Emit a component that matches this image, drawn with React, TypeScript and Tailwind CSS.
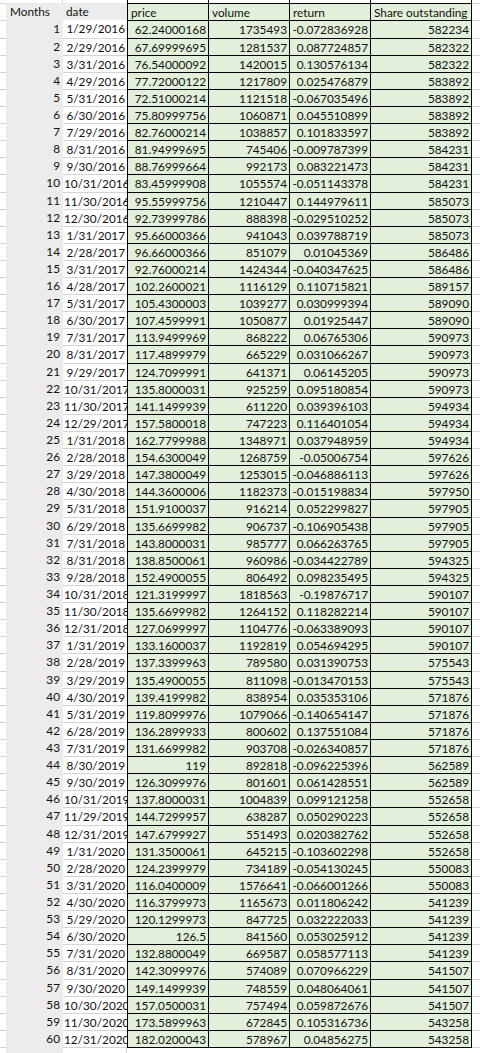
const rows: [string, string, string, string, string][] = [
  ["1/29/2016", "62.24000168", "1735493", "-0.072836928", "582234"],
  ["2/29/2016", "67.69999695", "1281537", "0.087724857", "582322"],
  ["3/31/2016", "76.54000092", "1420015", "0.130576134", "582322"],
  ["4/29/2016", "77.72000122", "1217809", "0.025476879", "583892"],
  ["5/31/2016", "72.51000214", "1121518", "-0.067035496", "583892"],
  ["6/30/2016", "75.80999756", "1060871", "0.045510899", "583892"],
  ["7/29/2016", "82.76000214", "1038857", "0.101833597", "583892"],
  ["8/31/2016", "81.94999695", "745406", "-0.009787399", "584231"],
  ["9/30/2016", "88.76999664", "992173", "0.083221473", "584231"],
  ["10/31/2016", "83.45999908", "1055574", "-0.051143378", "584231"],
  ["11/30/2016", "95.55999756", "1210447", "0.144979611", "585073"],
  ["12/30/2016", "92.73999786", "888398", "-0.029510252", "585073"],
  ["1/31/2017", "95.66000366", "941043", "0.039788719", "585073"],
  ["2/28/2017", "96.66000366", "851079", "0.01045369", "586486"],
  ["3/31/2017", "92.76000214", "1424344", "-0.040347625", "586486"],
  ["4/28/2017", "102.2600021", "1116129", "0.110715821", "589157"],
  ["5/31/2017", "105.4300003", "1039277", "0.030999394", "589090"],
  ["6/30/2017", "107.4599991", "1050877", "0.01925447", "589090"],
  ["7/31/2017", "113.9499969", "868222", "0.06765306", "590973"],
  ["8/31/2017", "117.4899979", "665229", "0.031066267", "590973"],
  ["9/29/2017", "124.7099991", "641371", "0.06145205", "590973"],
  ["10/31/2017", "135.8000031", "925259", "0.095180854", "590973"],
  ["11/30/2017", "141.1499939", "611220", "0.039396103", "594934"],
  ["12/29/2017", "157.5800018", "747223", "0.116401054", "594934"],
  ["1/31/2018", "162.7799988", "1348971", "0.037948959", "594934"],
  ["2/28/2018", "154.6300049", "1268759", "-0.05006754", "597626"],
  ["3/29/2018", "147.3800049", "1253015", "-0.046886113", "597626"],
  ["4/30/2018", "144.3600006", "1182373", "-0.015198834", "597950"],
  ["5/31/2018", "151.9100037", "916214", "0.052299827", "597905"],
  ["6/29/2018", "135.6699982", "906737", "-0.106905438", "597905"],
  ["7/31/2018", "143.8000031", "985777", "0.066263765", "597905"],
  ["8/31/2018", "138.8500061", "960986", "-0.034422789", "594325"],
  ["9/28/2018", "152.4900055", "806492", "0.098235495", "594325"],
  ["10/31/2018", "121.3199997", "1818563", "-0.19876717", "590107"],
  ["11/30/2018", "135.6699982", "1264152", "0.118282214", "590107"],
  ["12/31/2018", "127.0699997", "1104776", "-0.063389093", "590107"],
  ["1/31/2019", "133.1600037", "1192819", "0.054694295", "590107"],
  ["2/28/2019", "137.3399963", "789580", "0.031390753", "575543"],
  ["3/29/2019", "135.4900055", "811098", "-0.013470153", "575543"],
  ["4/30/2019", "139.4199982", "838954", "0.035353106", "571876"],
  ["5/31/2019", "119.8099976", "1079066", "-0.140654147", "571876"],
  ["6/28/2019", "136.2899933", "800602", "0.137551084", "571876"],
  ["7/31/2019", "131.6699982", "903708", "-0.026340857", "571876"],
  ["8/30/2019", "119", "892818", "-0.096225396", "562589"],
  ["9/30/2019", "126.3099976", "801601", "0.061428551", "562589"],
  ["10/31/2019", "137.8000031", "1004839", "0.099121258", "552658"],
  ["11/29/2019", "144.7299957", "638287", "0.050290223", "552658"],
  ["12/31/2019", "147.6799927", "551493", "0.020382762", "552658"],
  ["1/31/2020", "131.3500061", "645215", "-0.103602298", "552658"],
  ["2/28/2020", "124.2399979", "734189", "-0.054130245", "550083"],
  ["3/31/2020", "116.0400009", "1576641", "-0.066001266", "550083"],
  ["4/30/2020", "116.3799973", "1165673", "0.011806242", "541239"],
  ["5/29/2020", "120.1299973", "847725", "0.032222033", "541239"],
  ["6/30/2020", "126.5", "841560", "0.053025912", "541239"],
  ["7/31/2020", "132.8800049", "669587", "0.058577113", "541239"],
  ["8/31/2020", "142.3099976", "574089", "0.070966229", "541507"],
  ["9/30/2020", "149.1499939", "748559", "0.048064061", "541507"],
  ["10/30/2020", "157.0500031", "757494", "0.059872676", "541507"],
  ["11/30/2020", "173.5899963", "672845", "0.105316736", "543258"],
  ["12/31/2020", "182.0200043", "578967", "0.04856275", "543258"],
];

const cols = "grid grid-cols-[6px_57px_64px_81px_81px_81px_102px_1fr]";
const grid = "border-[#d4d4d4]";
const green = "bg-[#e2efda] border-t border-l border-black";

function Cell({ className, children }: { className: string; children?: React.ReactNode }) {
  return <div className={`overflow-hidden whitespace-nowrap ${className}`}>{children}</div>;
}

export default function App() {
  return (
    <div className="h-[1053px] w-[480px] overflow-hidden bg-white font-['Lato','Liberation_Sans',sans-serif] text-[11.8px] leading-[17.12px] text-[#111]">
      {/* row cut off above the header */}
      <div className={`${cols} h-[3.3px]`}>
        <Cell className="" />
        <Cell className={`border-r ${grid}`} />
        <Cell className="" />
        <Cell className="border-l border-black" />
        <Cell className="border-l border-black" />
        <Cell className="border-l border-black" />
        <Cell className="border-x border-black" />
        <Cell className="" />
      </div>

      {/* header */}
      <div className={`${cols} h-[17.12px]`}>
        <Cell className={`border-t ${grid}`} />
        <Cell className="bg-[#ececec] pl-[4px]">Months</Cell>
        <Cell className="bg-[#ececec] pl-[3px]">date</Cell>
        <Cell className={`${green} pl-[3px]`}>price</Cell>
        <Cell className={`${green} pl-[3px]`}>volume</Cell>
        <Cell className={`${green} pl-[3px]`}>return</Cell>
        <Cell className={`${green} border-r pl-[3px]`}>Share outstanding</Cell>
        <Cell className={`border-t ${grid}`} />
      </div>

      {rows.map(([date, price, volume, ret, shares], i) => (
        <div key={date} className={`${cols} h-[17.12px]`}>
          <Cell className={`border-t ${grid}`} />
          <Cell className="bg-[#ececec] pr-[3px] text-right">{i + 1}</Cell>
          <Cell className={`${i > 0 ? "border-t" : ""} ${grid} ${date.length > 9 ? "pl-[1px]" : "pr-[2px] text-right"}`}>
            {date}
          </Cell>
          <Cell className={`${green} pr-[2px] text-right`}>{price}</Cell>
          <Cell className={`${green} pr-[2px] text-right`}>{volume}</Cell>
          <Cell className={`${green} pr-[2px] text-right`}>{ret}</Cell>
          <Cell className={`${green} border-r pr-[2px] text-right`}>{shares}</Cell>
          <Cell className={`border-t ${grid}`} />
        </div>
      ))}

      {/* empty row below the data */}
      <div className={`${cols} h-[17.12px]`}>
        <Cell className={`border-t ${grid}`} />
        <Cell className="bg-[#ececec]" />
        <Cell className={`border-t border-r ${grid}`} />
        <Cell className={`border-t border-black`} />
        <Cell className={`border-t border-black`} />
        <Cell className={`border-t border-black`} />
        <Cell className={`border-t border-black`} />
        <Cell className={`border-t ${grid}`} />
      </div>
    </div>
  );
}
